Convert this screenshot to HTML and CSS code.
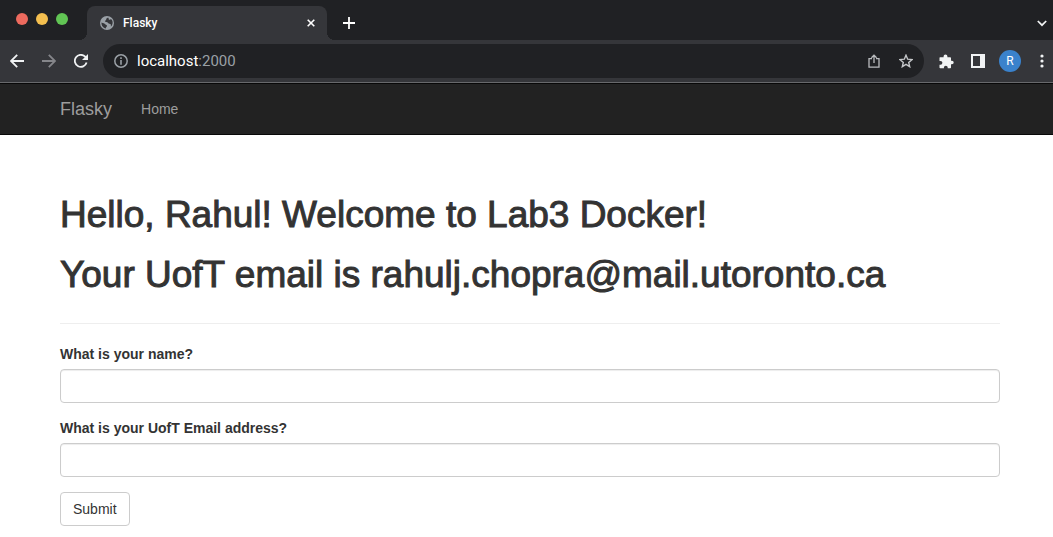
FILE: index.html
```html
<!DOCTYPE html>
<html lang="en">
<head>
<meta charset="utf-8">
<title>Flasky</title>
<link rel="stylesheet" href="styles.css">
</head>
<body>
<div class="browser">
  <div class="tab-strip">
    <div class="lights">
      <span class="light light-close"></span>
      <span class="light light-min"></span>
      <span class="light light-max"></span>
    </div>
    <div class="tab">
      <svg class="globe" width="14" height="14" viewBox="0 0 14 14"><circle cx="7" cy="7" r="7" fill="#9aa0a6"/><path d="M1.500 6.400C3 7.400 4.700 7 5.300 8.200 5.800 9.200 7 8.600 7 9.800 7 10.800 5.800 11 5.800 12.400 3.400 12 1.300 9.700 1.500 6.400ZM8 1.600C7.200 2.200 6.200 2.300 6.200 3.500 6.200 4.600 5 4.200 4.900 5.200 5 6.300 7.500 5.700 8.100 6.900 8.700 8 10.200 7.400 10.700 8.300 11 9 10.800 9.800 10.900 10.600 13.500 8 13 4 10.700 2.900 10.500 4 9 4.200 8.700 3.300 8.500 2.600 9 2.200 8 1.600Z" fill="#35363a"/></svg>
      <span class="tab-title">Flasky</span>
      <button class="icon-btn" aria-label="Close tab"><svg width="8" height="8" viewBox="0 0 8 8"><path d="M.7.7l6.600 6.600M7.300.7L.7 7.300" stroke="#fff" stroke-width="1.600"/></svg></button>
    </div>
    <button class="icon-btn new-tab" aria-label="New tab"><svg width="12" height="12" viewBox="0 0 12 12"><path d="M6 0v12M0 6h12" stroke="#fff" stroke-width="1.800"/></svg></button>
    <button class="icon-btn tab-search" aria-label="Search tabs"><svg width="10" height="7" viewBox="0 0 10 7"><path d="M.8 1L5 5.200 9.200 1" fill="none" stroke="#f1f3f4" stroke-width="1.700"/></svg></button>
  </div>
  <div class="toolbar">
    <div class="nav-buttons">
      <button class="icon-btn" aria-label="Back"><svg width="14" height="14" viewBox="0 0 14 14"><path d="M14 7H1.500M7.200.8L1 7l6.200 6.200" fill="none" stroke="#f1f3f4" stroke-width="1.800"/></svg></button>
      <button class="icon-btn" aria-label="Forward"><svg width="14" height="14" viewBox="0 0 14 14"><path d="M0 7h12.500M6.800.8L13 7l-6.200 6.200" fill="none" stroke="#85868a" stroke-width="1.800"/></svg></button>
      <button class="icon-btn" aria-label="Reload"><svg width="14" height="14" viewBox="0 0 14 14"><path d="M12.600 8.500A6 6 0 1 1 11.200 2.700L12 3.600" fill="none" stroke="#f1f3f4" stroke-width="1.800"/><path d="M14 0v6H8z" fill="#f1f3f4"/></svg></button>
    </div>
    <div class="omnibox">
      <svg width="14" height="14" viewBox="0 0 14 14"><circle cx="7" cy="7" r="6.200" fill="none" stroke="#9aa0a6" stroke-width="1.500"/><path d="M7 3.300v1.600M7 6v4.700" stroke="#9aa0a6" stroke-width="1.600"/></svg>
      <span class="url">localhost<span class="port">:2000</span></span>
      <button class="icon-btn" aria-label="Share"><svg width="12" height="14" viewBox="0 0 12 14"><path d="M4 4.700H1v8.500h10V4.700H8M6 9V1.300M3.400 3.800L6 1.200l2.600 2.600" fill="none" stroke="#b9bbbe" stroke-width="1.300"/></svg></button>
      <button class="icon-btn star" aria-label="Bookmark"><svg width="14" height="14" viewBox="0 0 14 14"><path d="M7 1.200l1.700 4 4.300.4-3.300 2.800 1 4.300L7 10.400l-3.700 2.300 1-4.300L1 5.600l4.300-.4z" fill="none" stroke="#c4c6c9" stroke-width="1.400"/></svg></button>
    </div>
    <div class="actions">
      <button class="icon-btn" aria-label="Extensions"><svg width="15" height="15" viewBox="0 0 15 15"><path d="M1 3.300H4.600V2.300A1.900 1.900 0 0 1 8.400 2.300V3.300H11.200Q12 3.300 12 4.100V6.700H12.900A1.800 1.800 0 0 1 12.900 10.300H12V13.500Q12 14.300 11.200 14.300H8.700V13.600A1.900 1.900 0 0 0 4.900 13.600V14.300H1.200Q.5 14.300.5 13.500V10.700H1.500A1.900 1.900 0 0 0 1.500 6.900H.5V4Q.5 3.300 1 3.300Z" fill="#f1f3f4"/></svg></button>
      <button class="icon-btn" aria-label="Side panel"><svg width="14" height="14" viewBox="0 0 14 14"><path fill-rule="evenodd" d="M0 0h14v14H0zM2 2v10h7V2z" fill="#f1f3f4"/></svg></button>
      <button class="avatar" aria-label="Profile R">R</button>
      <button class="icon-btn menu" aria-label="Menu"><svg width="4" height="14" viewBox="0 0 4 14"><g fill="#f1f3f4"><circle cx="2" cy="2" r="1.600"/><circle cx="2" cy="7" r="1.600"/><circle cx="2" cy="12" r="1.600"/></g></svg></button>
    </div>
  </div>
</div>
<nav class="navbar">
  <a class="brand" href="#">Flasky</a>
  <a class="nav-link" href="#">Home</a>
</nav>
<main class="container">
  <header class="page-header">
    <h1>Hello, Rahul! Welcome to Lab3 Docker!</h1>
    <h1>Your UofT email is rahulj.chopra@mail.utoronto.ca</h1>
  </header>
  <form class="form">
    <div class="form-group">
      <label for="name">What is your name?</label>
      <input class="form-control" id="name" type="text">
    </div>
    <div class="form-group">
      <label for="email">What is your UofT Email address?</label>
      <input class="form-control" id="email" type="text">
    </div>
    <button class="submit" type="button">Submit</button>
  </form>
</main>
</body>
</html>
```
FILE: styles.css
```css
* { box-sizing: border-box; }
body {
  margin: 0;
  background: #fff;
  color: #333;
  font: 14px/20px "Helvetica Neue", "Liberation Sans", Arial, sans-serif;
}
svg { display: block; flex: none; }
button { font-family: inherit; }
.icon-btn {
  display: flex;
  padding: 0;
  border: 0;
  background: none;
}
.browser {
  background: #35363a;
  border-bottom: 1px solid #68696c;
  font-family: Roboto, sans-serif;
}
.tab-strip {
  display: flex;
  height: 40px;
  padding: 6px 6px 0 16px;
  background: #202124;
}
.lights {
  display: flex;
  gap: 8px;
  padding-top: 7px;
  margin-right: 19px;
}
.light {
  width: 12px;
  height: 12px;
  border-radius: 50%;
}
.light-close { background: #ed6a5e; }
.light-min { background: #f4bf4f; }
.light-max { background: #61c554; }
.tab {
  position: relative;
  display: flex;
  align-items: center;
  width: 240px;
  padding: 0 12px 0 13px;
  border-radius: 8px 8px 0 0;
  background: #35363a;
}
.tab::before,
.tab::after {
  content: "";
  position: absolute;
  bottom: 0;
  width: 8px;
  height: 8px;
}
.tab::before {
  right: 100%;
  background: radial-gradient(circle at 0 0, #202124 8px, #35363a 8px);
}
.tab::after {
  left: 100%;
  background: radial-gradient(circle at 100% 0, #202124 8px, #35363a 8px);
}
.tab-title {
  flex: 1;
  margin-left: 9px;
  color: #fff;
  font-size: 12px;
  font-weight: 500;
}
.new-tab { align-self: center; margin-left: 16px; }
.tab-search { align-self: center; margin-left: auto; }
.toolbar {
  display: flex;
  align-items: center;
  height: 42px;
  padding: 0 9px 0 10px;
}
.nav-buttons { display: flex; gap: 18px; margin-right: 15px; }
.omnibox {
  display: flex;
  flex: 1;
  align-items: center;
  height: 34px;
  padding: 0 11px;
  border-radius: 17px;
  background: #202124;
}
.url {
  flex: 1;
  margin-left: 9px;
  color: #fff;
  font-size: 15px;
}
.port { color: #9aa0a6; }
.star { margin-left: 19px; }
.actions {
  display: flex;
  align-items: center;
  gap: 17px;
  margin-left: 15px;
}
.avatar {
  width: 22px;
  height: 22px;
  margin-left: -3px;
  padding: 0;
  border: 0;
  border-radius: 50%;
  background: #3a82cc;
  color: #fff;
  font: 12px/22px Roboto, sans-serif;
}
.menu { margin-left: 2px; }
.navbar {
  display: flex;
  align-items: center;
  gap: 29px;
  min-height: 52px;
  padding: 0 60px;
  border: solid #080808;
  border-width: 1px 0;
  background: #222;
}
.navbar a { color: #9d9d9d; text-decoration: none; }
.navbar .brand { font-size: 18px; }
.container { padding: 60px 53px 11px 60px; }
.page-header {
  margin-bottom: 20px;
  padding-bottom: 28px;
  border-bottom: 1px solid #eee;
}
h1 {
  margin: 0;
  font-size: 37px;
  font-weight: 400;
  line-height: 40px;
  -webkit-text-stroke: 1px #333;
}
h1 + h1 { margin-top: 20px; }
.form-group { margin-bottom: 15px; }
label {
  display: block;
  margin-bottom: 5px;
  font-weight: 700;
}
.form-control {
  display: block;
  width: 100%;
  height: 34px;
  padding: 6px 12px;
  border: 1px solid #ccc;
  border-radius: 4px;
  background: #fff;
  color: #555;
  font: inherit;
  box-shadow: inset 0 1px 1px rgba(0, 0, 0, .075);
}
.submit {
  padding: 6px 12px;
  border: 1px solid #ccc;
  border-radius: 4px;
  background: #fff;
  color: #333;
  font: inherit;
}
```
